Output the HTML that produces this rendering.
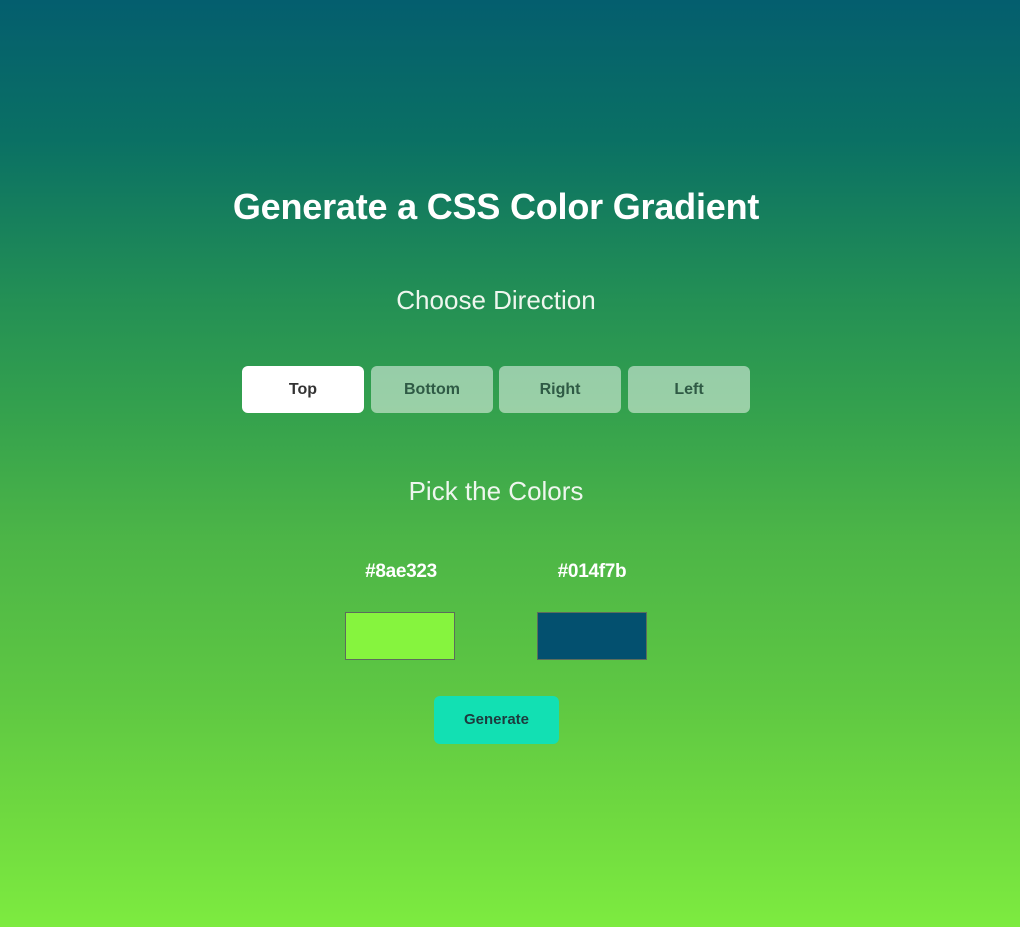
<!DOCTYPE html>
<html><head><meta charset="utf-8"><style>
html,body{margin:0;padding:0}
body{width:1020px;height:927px;position:relative;overflow:hidden;font-family:"Liberation Sans",sans-serif;
background:linear-gradient(to bottom,#045e6e 0%,#0a7064 15%,#238f55 32%,#35a24d 45%,#4cb547 58%,#5ec743 75%,#6fd940 88%,#7deb40 100%);}
.t{position:absolute;left:0;width:992px;text-align:center;color:#fff}
.btn{position:absolute;top:366px;width:122px;height:47px;border-radius:6px;background:rgba(255,255,255,0.5);color:#2f5a45;font-weight:bold;font-size:16px;line-height:47px;text-align:center}
.sw{position:absolute;top:612px;width:108px;height:46px;border:1px solid #5c6d5c}
.hx{position:absolute;width:110px;top:561px;text-align:center;color:#fff;font-size:19px;font-weight:bold;letter-spacing:-0.3px}
</style></head><body>
<div class="t" style="top:186px;font-size:36px;font-weight:bold;letter-spacing:-0.2px">Generate a CSS Color Gradient</div>
<div class="t" style="top:285px;font-size:26px;color:#eef6ee">Choose Direction</div>
<div class="btn" style="left:242px;background:#fff;color:#333">Top</div>
<div class="btn" style="left:371px">Bottom</div>
<div class="btn" style="left:499px">Right</div>
<div class="btn" style="left:628px">Left</div>
<div class="t" style="top:476px;font-size:26px;color:#eef6ee">Pick the Colors</div>
<div class="hx" style="left:346px">#8ae323</div>
<div class="hx" style="left:537px">#014f7b</div>
<div class="sw" style="left:345px;background:#86f43e"></div>
<div class="sw" style="left:537px;background:#03506f"></div>
<div style="position:absolute;left:434px;top:696px;width:125px;height:48px;border-radius:6px;background:#12e0b3;color:#1d3b3e;font-weight:bold;font-size:15px;line-height:48px;text-align:center">Generate</div>
</body></html>
